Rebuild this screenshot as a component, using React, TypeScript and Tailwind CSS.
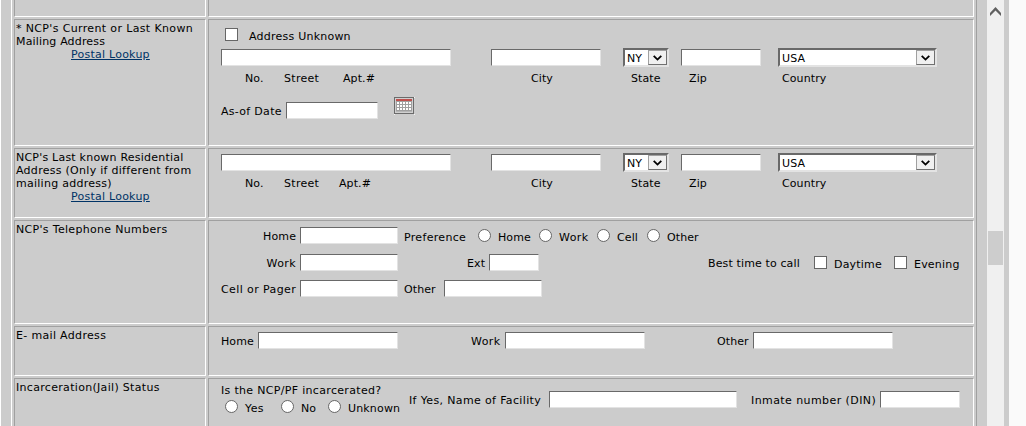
import type { ReactNode } from 'react';

type Props = { className?: string; children?: ReactNode };

const T = ({ className = '', children }: Props) => (
  <span className={`block shrink-0 whitespace-pre ${className}`}>{children}</span>
);

const Input = ({ className = '' }: Props) => (
  <input
    type="text"
    className={`block h-[17px] shrink-0 border border-t-[#696969] border-r-[#e3e3e3] border-b-[#e3e3e3] border-l-[#696969] bg-white px-1 outline-none ${className}`}
  />
);

const Check = ({ className = '' }: Props) => (
  <input
    type="checkbox"
    className={`block size-[13px] shrink-0 appearance-none border border-[#666] bg-white ${className}`}
  />
);

const Radio = ({ className = '' }: Props) => (
  <input
    type="radio"
    className={`block size-[13px] shrink-0 appearance-none rounded-full border border-[#666] bg-white ${className}`}
  />
);

const Select = ({ className = '', children }: Props) => (
  <div
    className={`flex h-[19px] shrink-0 justify-between border-2 border-t-[#696969] border-r-[#e3e3e3] border-b-[#e3e3e3] border-l-[#696969] bg-white ${className}`}
  >
    <span className="pt-[2px] pl-[2px]">{children}</span>
    <span className="flex h-[15px] w-[19px] items-center justify-center border border-[#707070] border-t-[#a0a0a0] border-l-[#a0a0a0] bg-[#f0f0f0]">
      <svg width="9" height="6" viewBox="0 0 9 6" fill="none" stroke="#000" strokeWidth="1.8">
        <path d="M0.7 0.8L4.5 4.6L8.3 0.8" />
      </svg>
    </span>
  </div>
);

const Calendar = () => (
  <svg className="ml-4 block shrink-0" width="21" height="18" viewBox="0 0 21 18" shapeRendering="crispEdges">
    <path d="M20 0h1v1h-1zM0 17h1v1h-1zM20 17h1v1h-1z" fill="#f4f4f4" />
    <rect width="20" height="17" fill="#6b6b6b" />
    <rect x="1" y="1" width="18" height="15" fill="#d0d0d0" />
    <rect x="2" y="2" width="16" height="2" fill="#c0504d" />
    <rect x="2" y="4" width="16" height="10" fill="#a0a0a0" />
    <g fill="#fff">
      {[4, 7, 10].map((y) =>
        [3, 6, 9, 12, 15].map((x) => <rect key={`${x}-${y}`} x={x} y={y + 1} width="2" height="2" />),
      )}
    </g>
    <rect x="2" y="14" width="16" height="1" fill="#b5b5b5" />
  </svg>
);

const bevel = 'border border-t-[#a0a0a0] border-l-[#a0a0a0] border-r-white border-b-white';

const Row = ({ height, label, children }: { height: string; label?: ReactNode; children?: ReactNode }) => (
  <div className={`flex shrink-0 gap-[2px] ${height}`}>
    <div className={`w-[192px] shrink-0 pt-[2px] pl-px ${bevel}`}>{label}</div>
    <div className={`w-[766px] shrink-0 pl-3 ${bevel}`}>{children}</div>
  </div>
);

const Lookup = () => (
  <a href="#" className="ml-[55px] block w-fit tracking-[0.24px] text-[#003366] underline">
    Postal Lookup
  </a>
);

const AddressFields = () => (
  <div className="flex h-[19px] items-center">
    <Input className="w-[230px]" />
    <Input className="ml-10 w-[110px]" />
    <Select className="ml-[22px] w-[46px]">NY</Select>
    <Input className="ml-3 w-[80px]" />
    <Select className="ml-[17px] w-[159px]">USA</Select>
  </div>
);

const AddressCaptions = ({ street }: { street: string }) => (
  <div className="mt-[5px] flex pl-6">
    <T className="w-[39px]">No.</T>
    <T className={`tracking-[0.3px] ${street}`}>Street</T>
    <T className="flex-1">Apt.#</T>
    <T className="w-[100px]">City</T>
    <T className="w-[58px]">State</T>
    <T className="w-[93px]">Zip</T>
    <T className="w-[191px]">Country</T>
  </div>
);

export default function App() {
  return (
    <div className="flex h-[426px] w-[1026px] overflow-hidden bg-[#ccc] font-['DejaVu_Sans',sans-serif] text-[11px] leading-[13px] tracking-[0.1px] text-black">
      <div className="w-px shrink-0 bg-white" />
      <div className="ml-[10px] flex w-[966px] shrink-0 flex-col gap-[2px] border-r border-l border-r-[#a0a0a0] border-l-white pl-[2px]">
        <Row height="h-[17px] [&>div]:border-t-0" />

        <Row
          height="h-[127px]"
          label={
            <>
              <T className="tracking-[0.36px]">* NCP's Current or Last Known</T>
              <T className="tracking-[0.16px]">Mailing Address</T>
              <Lookup />
            </>
          }
        >
          <div className="flex h-7 pt-2 pl-1">
            <Check />
            <T className="ml-[11px] pt-[2px] tracking-[0.23px]">Address Unknown</T>
          </div>
          <AddressFields />
          <AddressCaptions street="w-[59px]" />
          <div className="mt-3 flex">
            <T className="mt-[8px] w-[65px] tracking-[0.3px]">As-of Date</T>
            <Input className="mt-[5px] w-[92px]" />
            <Calendar />
          </div>
        </Row>

        <Row
          height="h-[70px]"
          label={
            <>
              <T className="tracking-[0.22px]">NCP's Last known Residential</T>
              <T className="tracking-[0.28px]">Address (Only if different from</T>
              <T className="tracking-[0.26px]">mailing address)</T>
              <Lookup />
            </>
          }
        >
          <div className="pt-1">
            <AddressFields />
            <AddressCaptions street="w-[55px]" />
          </div>
        </Row>

        <Row height="h-[104px]" label={<T className="tracking-[0.32px]">NCP's Telephone Numbers</T>}>
          <div className="flex h-[27px] pt-[6px]">
            <T className="mr-1 w-[75px] pt-[3px] text-right">Home</T>
            <Input className="w-[98px]" />
            <T className="ml-[6px] w-[74px] pt-1 tracking-[0.32px]">Preference</T>
            <Radio className="mt-[2px]" />
            <T className="ml-[7px] w-[41px] pt-1">Home</T>
            <Radio className="mt-[2px]" />
            <T className="ml-[7px] w-[38px] pt-1 tracking-[0.4px]">Work</T>
            <Radio className="mt-[2px]" />
            <T className="ml-[7px] w-[30px] pt-1">Cell</T>
            <Radio className="mt-[2px]" />
            <T className="ml-[7px] pt-1">Other</T>
          </div>
          <div className="flex h-[26px] pt-[6px]">
            <T className="mr-1 w-[75px] pt-[3px] text-right tracking-[0.4px]">Work</T>
            <Input className="w-[98px]" />
            <T className="ml-[69px] w-[22px] pt-[3px]">Ext</T>
            <Input className="w-[50px]" />
            <T className="ml-[169px] w-[106px] pt-[3px] tracking-[0.13px]">Best time to call</T>
            <Check className="mt-[2px]" />
            <T className="ml-[7px] w-[60px] pt-1 tracking-[0.2px]">Daytime</T>
            <Check className="mt-[2px]" />
            <T className="ml-[7px] pt-1 tracking-[0.2px]">Evening</T>
          </div>
          <div className="flex h-[26px] pt-[6px]">
            <T className="mr-1 w-[75px] pt-[3px] tracking-[0.4px]">Cell or Pager</T>
            <Input className="w-[98px]" />
            <T className="ml-[6px] w-10 pt-[3px]">Other</T>
            <Input className="w-[98px]" />
          </div>
        </Row>

        <Row height="h-[50px]" label={<T className="tracking-[0.33px]">E- mail Address</T>}>
          <div className="flex pt-[5px]">
            <T className="w-[37px] pt-[3px]">Home</T>
            <Input className="w-[140px]" />
            <T className="ml-[73px] w-[34px] pt-[3px] tracking-[0.4px]">Work</T>
            <Input className="w-[140px]" />
            <T className="ml-[72px] w-9 pt-[3px]">Other</T>
            <Input className="w-[140px]" />
          </div>
        </Row>

        <Row height="h-[60px]" label={<T className="tracking-[0.31px]">Incarceration(Jail) Status</T>}>
          <div className="flex">
            <div className="w-[188px] shrink-0 pt-[5px]">
              <T className="tracking-[0.32px]">Is the NCP/PF incarcerated?</T>
              <div className="flex pt-[3px] pl-1">
                <Radio />
                <T className="ml-[7px] w-9 pt-[2px] tracking-[0.4px]">Yes</T>
                <Radio />
                <T className="ml-[7px] w-[27px] pt-[2px]">No</T>
                <Radio />
                <T className="ml-[7px] pt-[2px] tracking-[0.16px]">Unknown</T>
              </div>
            </div>
            <div className="flex pt-3">
              <T className="w-[140px] pt-[3px] tracking-[0.36px]">If Yes, Name of Facility</T>
              <Input className="w-[188px]" />
              <T className="ml-[14px] w-[129px] pt-[3px] tracking-[0.42px]">Inmate number (DIN)</T>
              <Input className="w-[80px]" />
            </div>
          </div>
        </Row>
      </div>

      <div className="ml-[10px] flex w-[17px] shrink-0 flex-col items-center bg-[#f0f0f0]">
        <svg className="mt-[7px] block shrink-0" width="11" height="9" viewBox="0 0 11 9">
          <path d="M0 6L5.5 0L11 6V9L5.5 3.6L0 9Z" fill="#606060" />
        </svg>
        <div className="mt-[215px] h-[34px] w-[15px] shrink-0 bg-[#cdcdcd]" />
      </div>
      <div className="ml-[5px] flex-1 bg-[#fafafa]" />
    </div>
  );
}
